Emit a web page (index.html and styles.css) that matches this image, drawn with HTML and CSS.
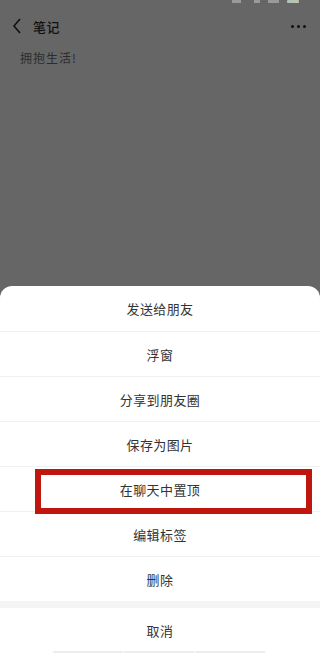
FILE: index.html
```html
<!DOCTYPE html>
<html lang="zh">
<head>
<meta charset="utf-8">
<link rel="stylesheet" href="styles.css">
</head>
<body>
<div class="screen">
  <div class="status">
    <span class="st st1"></span>
    <span class="st st2"></span>
    <span class="st st3"></span>
    <span class="st st4"></span>
  </div>
  <div class="header">
    <svg class="back" width="10" height="16" viewBox="0 0 10 16"><path d="M8 1 L2 8 L8 15" fill="none" stroke="#111" stroke-width="1.6"/></svg>
    <span class="title">笔记</span>
    <span class="more"><i></i><i></i><i></i></span>
  </div>
  <div class="note">拥抱生活!</div>
  <div class="spacer"></div>
  <div class="sheet">
    <div class="row">发送给朋友</div>
    <div class="row">浮窗</div>
    <div class="row">分享到朋友圈</div>
    <div class="row">保存为图片</div>
    <div class="row hl">在聊天中置顶<span class="mark"></span></div>
    <div class="row">编辑标签</div>
    <div class="row">删除</div>
    <div class="gap"></div>
    <div class="row cancel">取消</div>
    <div class="home"><span></span><span></span><span></span></div>
  </div>
</div>
</body>
</html>
```
FILE: styles.css
```css
html, body {
  margin: 0;
  padding: 0;
}
body {
  background: #666666;
  font-family: "Noto Sans CJK SC", "Noto Sans", sans-serif;
}
.screen {
  width: 320px;
  height: 653px;
  display: flex;
  flex-direction: column;
  position: relative;
  overflow: hidden;
}
.status {
  height: 6px;
  position: relative;
}
.st {
  position: absolute;
  top: 0;
  height: 3px;
  background: #9a9a9a;
}
.st1 { left: 232px; width: 9px; }
.st2 { left: 254px; width: 6px; }
.st3 { left: 268px; width: 11px; }
.st4 { left: 287px; width: 12px; background: linear-gradient(90deg, #a9c4bc, #c4c2a6); border-radius: 1px; }
.header {
  height: 40px;
  display: flex;
  align-items: center;
  padding: 0 14px 0 12px;
}
.back {
  display: block;
}
.title {
  margin-left: 11px;
  font-size: 13px;
  color: #111;
  font-weight: 500;
  letter-spacing: 0.5px;
}
.more {
  margin-left: auto;
  display: flex;
  gap: 3px;
}
.more i {
  width: 3px;
  height: 3px;
  border-radius: 50%;
  background: #111;
  display: block;
}
.note {
  padding: 4px 0 0 20px;
  font-size: 12px;
  color: #2c2c2c;
  letter-spacing: 1px;
  line-height: 16px;
}
.spacer {
  flex: 1;
}
.sheet {
  background: #ffffff;
  border-radius: 12px 12px 0 0;
  display: flex;
  flex-direction: column;
  position: relative;
}
.row {
  height: 45px;
  display: flex;
  align-items: center;
  justify-content: center;
  font-size: 13px;
  color: #333;
  letter-spacing: 0.4px;
  border-top: 1px solid #f0f0f0;
  box-sizing: border-box;
  position: relative;
}
.row:first-child {
  border-top: none;
}
.gap {
  height: 7px;
  background: #f4f4f4;
}
.gap + .row {
  border-top: none;
}
.mark {
  position: absolute;
  left: 35px;
  top: 2px;
  width: 277px;
  height: 45px;
  border: 6px solid #bf160d;
  box-sizing: border-box;
  z-index: 2;
}
.home {
  position: absolute;
  left: 53px;
  bottom: 0;
  display: flex;
  gap: 1px;
}
.home span {
  display: block;
  width: 70px;
  height: 2px;
  background: #ececec;
}
```
